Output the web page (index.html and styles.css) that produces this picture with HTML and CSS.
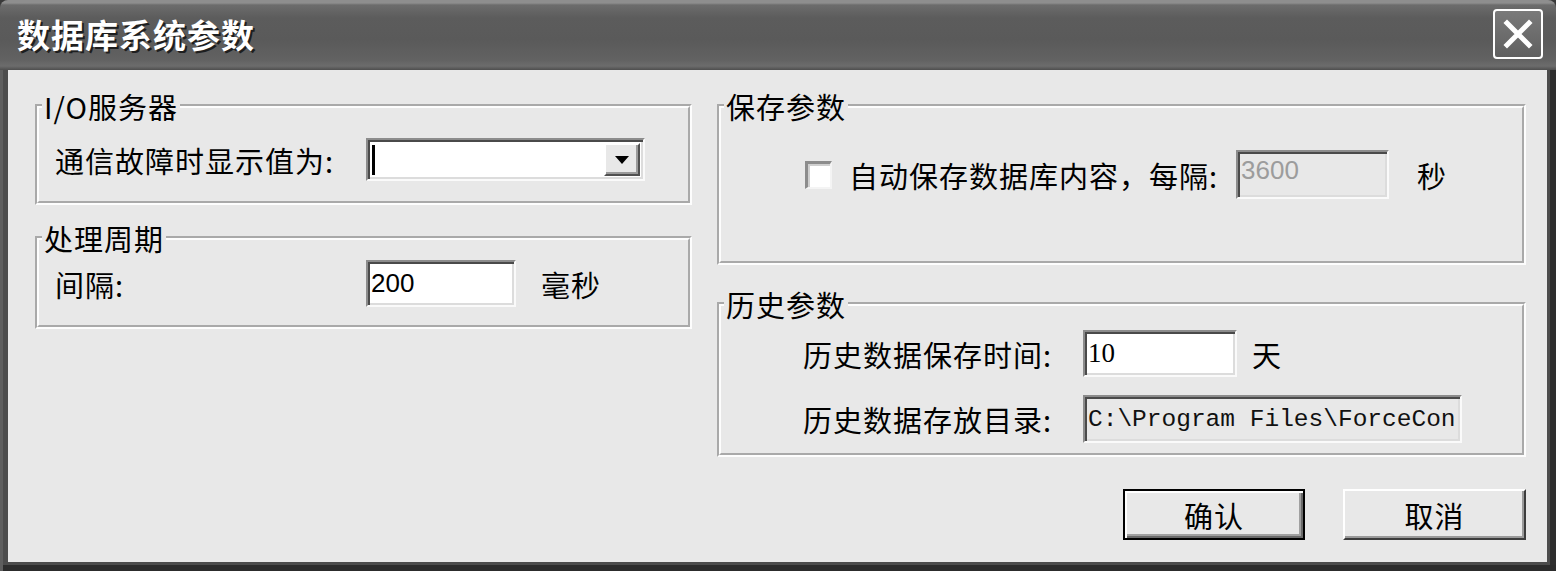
FILE: index.html
```html
<!DOCTYPE html>
<html lang="zh-CN">
<head>
  <meta charset="UTF-8">
  <title>数据库系统参数</title>
  <link rel="stylesheet" href="styles.css">
</head>
<body>
  <div class="window">
    <div class="titlebar">
      <span class="title">数据库系统参数</span>
      <span class="close">
        <svg width="30" height="30" viewBox="0 0 30 30">
          <path d="M4 4 L26 26 M26 4 L4 26" stroke="#fff" stroke-width="5" stroke-linecap="square"/>
        </svg>
      </span>
    </div>
    <div class="frame">
      <div class="client">
        <div class="col col-left">
          <fieldset class="group g-io">
            <legend>I/O服务器</legend>
            <div class="grid-left">
              <span class="label">通信故障时显示值为:</span>
              <div class="combo">
                <span class="combo-text"><span class="cursor"></span></span>
                <span class="drop">
                  <svg width="14" height="8" viewBox="0 0 14 8"><path d="M0 0 H14 L7 8 Z" fill="#000"/></svg>
                </span>
              </div>
            </div>
          </fieldset>

          <fieldset class="group g-cycle">
            <legend>处理周期</legend>
            <div class="grid-left">
              <span class="label">间隔:</span>
              <div class="inline">
                <span class="edit edit-ms">200</span>
                <span class="unit">毫秒</span>
              </div>
            </div>
          </fieldset>
        </div>

        <div class="col col-right">
          <fieldset class="group g-save">
            <legend>保存参数</legend>
            <div class="save-row">
              <span class="check"></span>
              <span class="save-label">自动保存数据库内容，每隔:</span>
              <span class="edit edit-off edit-sec">3600</span>
              <span class="unit unit-sec">秒</span>
            </div>
          </fieldset>

          <fieldset class="group g-hist">
            <legend>历史参数</legend>
            <div class="grid-hist">
              <span class="label">历史数据保存时间:</span>
              <div class="inline">
                <span class="edit edit-days">10</span>
                <span class="unit unit-day">天</span>
              </div>
              <span class="label">历史数据存放目录:</span>
              <span class="edit edit-off edit-path">C:\Program Files\ForceCon</span>
            </div>
          </fieldset>

          <div class="buttons">
            <button class="btn btn-default">确认</button>
            <button class="btn">取消</button>
          </div>
        </div>
      </div>
    </div>
  </div>
</body>
</html>
```

FILE: styles.css
```css
* {
  box-sizing: border-box;
}
html, body {
  margin: 0;
  height: 100%;
}
body {
  background: #3a3a3a;
  font-family: "Noto Sans CJK SC", "Liberation Sans", sans-serif;
  font-size: 29px;
  letter-spacing: 1px;
  color: #000;
}
.window {
  width: 1556px;
  height: 571px;
  display: flex;
  flex-direction: column;
}
.titlebar {
  height: 70px;
  flex: 0 0 70px;
  display: flex;
  align-items: center;
  justify-content: space-between;
  padding: 0 13px 2px 17px;
  background: linear-gradient(#8e8e8e 0, #8e8e8e 3px, #6c6c6c 5px, #5c5c5c 18px, #5a5a5a 40px, #626262 60px, #6c6c6c 66px, #4e4e4e 70px);
  border-radius: 8px 8px 0 0;
}
.title {
  color: #fff;
  font-weight: bold;
  font-size: 33px;
  letter-spacing: 1px;
  text-shadow: 2px 2px 0 #1e1e1e;
}
.close {
  width: 50px;
  height: 50px;
  border: 2px solid #fff;
  border-radius: 4px;
  background: linear-gradient(#7a7a7a, #606060);
  display: flex;
  align-items: center;
  justify-content: center;
}
.frame {
  flex: 1;
  display: flex;
  background: #4c4c4c;
  padding: 0 9px 9px 8px;
  box-shadow: inset 3px 0 0 #5e5e5e, inset 0 -6px 0 #2c2c2c, inset -6px 0 0 #2e2e2e;
}
.client {
  flex: 1;
  display: flex;
  gap: 25px;
  background: #e8e8e8;
  padding: 19px 20px 0 27px;
}
.col {
  display: flex;
  flex-direction: column;
}
.col-left {
  width: 657px;
  gap: 16px;
}
.col-right {
  width: 809px;
  gap: 22px;
}
.group {
  margin: 0;
  padding: 0;
  min-width: 0;
  border: 4px groove #fdfdfd;
}
.group legend {
  padding: 0 2px;
  margin-left: 3px;
  line-height: 34px;
}
.label {
  white-space: nowrap;
}
.grid-left {
  display: grid;
  grid-template-columns: 311px auto;
  align-items: center;
  padding-left: 16px;
}
.g-io .grid-left {
  padding-top: 15px;
  padding-bottom: 20px;
}
.g-cycle .grid-left {
  padding-top: 5px;
  padding-bottom: 18px;
}
.inline {
  display: flex;
  align-items: center;
}
.combo {
  width: 279px;
  height: 43px;
  display: flex;
  background: #fff;
  border-top: 2px solid #8c8c8c;
  border-left: 2px solid #8c8c8c;
  border-right: 2px solid #fafafa;
  border-bottom: 2px solid #fafafa;
  box-shadow: inset 2px 2px 0 #4a4a4a, inset -2px -2px 0 #dcdcdc;
  padding: 3px 3px 3px 4px;
}
.combo-text {
  flex: 1;
  display: flex;
  align-items: center;
}
.cursor {
  width: 3px;
  height: 30px;
  background: #000;
}
.drop {
  width: 36px;
  display: flex;
  align-items: center;
  justify-content: center;
  background: #e8e8e8;
  border-top: 2px solid #fff;
  border-left: 2px solid #fff;
  border-right: 2px solid #505050;
  border-bottom: 2px solid #505050;
  box-shadow: inset -2px -2px 0 #9a9a9a;
}
.edit {
  display: flex;
  align-items: center;
  background: #fff;
  border-top: 2px solid #8c8c8c;
  border-left: 2px solid #8c8c8c;
  border-right: 2px solid #fafafa;
  border-bottom: 2px solid #fafafa;
  box-shadow: inset 2px 2px 0 #4a4a4a, inset -2px -2px 0 #dcdcdc;
  padding-left: 3px;
  font-family: "Liberation Sans", sans-serif;
  font-size: 26px;
  letter-spacing: 0;
}
.edit-off {
  background: #e8e8e8;
  color: #9c9c9c;
}
.edit-ms {
  width: 150px;
  height: 47px;
}
.unit {
  margin-left: 25px;
}
.save-row {
  display: flex;
  align-items: center;
  padding: 27px 0 62px 84px;
}
.check {
  width: 27px;
  height: 28px;
  background: #fff;
  border-top: 3px solid #8c8c8c;
  border-left: 3px solid #8c8c8c;
  border-right: 2px solid #f4f4f4;
  border-bottom: 2px solid #f4f4f4;
  box-shadow: inset 2px 2px 0 #cfcfcf;
  margin-right: 17px;
}
.save-label {
  width: 387px;
  white-space: nowrap;
}
.edit-sec {
  width: 153px;
  height: 49px;
  align-items: flex-start;
  padding-top: 3px;
}
.unit-sec {
  margin-left: 28px;
}
.grid-hist {
  display: grid;
  grid-template-columns: 280px auto;
  row-gap: 18px;
  align-items: center;
  padding: 9px 0 10px 82px;
}
.edit-days {
  width: 154px;
  height: 47px;
  font-family: "Liberation Serif", serif;
  font-size: 27px;
}
.unit-day {
  margin-left: 15px;
}
.edit-path {
  width: 379px;
  height: 48px;
  color: #111;
  font-family: "Liberation Mono", monospace;
  font-size: 24.5px;
  white-space: nowrap;
  overflow: hidden;
}
.buttons {
  display: flex;
  justify-content: flex-end;
  gap: 38px;
  margin-top: 10px;
}
.btn {
  width: 183px;
  height: 51px;
  font-family: "Noto Sans CJK SC", sans-serif;
  font-size: 29px;
  letter-spacing: 1px;
  color: #000;
  background: #e8e8e8;
  border-top: 2px solid #fff;
  border-left: 2px solid #fff;
  border-right: 2px solid #3c3c3c;
  border-bottom: 2px solid #3c3c3c;
  box-shadow: inset -2px -2px 0 #9a9a9a;
  padding: 0;
}
.btn-default {
  width: 182px;
  border: 2px solid #000;
  box-shadow: inset 2px 2px 0 #fff, inset -2px -2px 0 #6a6a6a, inset -4px -4px 0 #a0a0a0;
}
```
